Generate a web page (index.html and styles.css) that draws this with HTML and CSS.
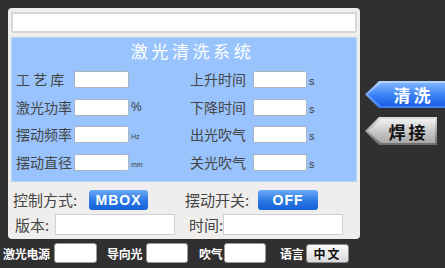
FILE: index.html
```html
<!DOCTYPE html>
<html lang="zh">
<head>
<meta charset="utf-8">
<link rel="stylesheet" href="styles.css">
</head>
<body>
<div class="screen">
  <div class="main">
    <div class="panel">
      <div class="topbar"></div>
      <div class="blue">
        <div class="title">激光清洗系统</div>
        <div class="grid">
          <div class="row">
            <span class="lbl spaced">工 艺 库</span><span class="fld"></span><span class="unit"></span>
            <span class="rlbl">上升时间</span><span class="fld r"></span><span class="unit s">s</span>
          </div>
          <div class="row">
            <span class="lbl">激光功率</span><span class="fld"></span><span class="unit pct">%</span>
            <span class="rlbl">下降时间</span><span class="fld r"></span><span class="unit s">s</span>
          </div>
          <div class="row">
            <span class="lbl">摆动频率</span><span class="fld"></span><span class="unit tiny">Hz</span>
            <span class="rlbl">出光吹气</span><span class="fld r"></span><span class="unit s">s</span>
          </div>
          <div class="row">
            <span class="lbl">摆动直径</span><span class="fld"></span><span class="unit tiny">mm</span>
            <span class="rlbl">关光吹气</span><span class="fld r"></span><span class="unit s">s</span>
          </div>
        </div>
      </div>
      <div class="ctrl">
        <span class="clbl">控制方式:</span><span class="btn mbox">MBOX</span>
        <span class="clbl second">摆动开关:</span><span class="btn off">OFF</span>
      </div>
      <div class="ver">
        <span class="vlbl">版本:</span><span class="vfld"></span>
        <span class="vlbl time">时间:</span><span class="vfld"></span>
      </div>
    </div>
    <div class="tabs">
      <div class="tab blue-tab"><div class="tab-in"><span>清洗</span></div></div>
      <div class="tab grey-tab"><div class="tab-in"><span>焊接</span></div></div>
    </div>
  </div>
  <div class="bottom">
    <span class="blbl b1">激光电源</span><span class="bfld f1"></span>
    <span class="blbl b2">导向光</span><span class="bfld f2"></span>
    <span class="blbl b3">吹气</span><span class="bfld f3"></span>
    <span class="blbl b4">语言</span><span class="langbtn">中文</span>
  </div>
</div>
</body>
</html>
```
FILE: styles.css
```css
* { box-sizing: border-box; }
html, body { margin: 0; padding: 0; }
body {
  width: 445px; height: 268px; overflow: hidden;
  background: #303030;
  font-family: "Noto Sans CJK SC", "Noto Sans", sans-serif;
}
.screen { width: 445px; height: 268px; display: flex; flex-direction: column; }
.main { display: flex; padding: 8px 0 0 8px; }
.panel {
  width: 355px; height: 231px;
  background: #efeeec;
  border-radius: 4px;
  padding: 4px 3px 4px 3px;
  display: flex; flex-direction: column;
}
.topbar {
  height: 21px; background: #fff;
  border: 2px solid #d6d6d6;
  border-radius: 2px;
}
.blue {
  margin-top: 4px; height: 145px;
  background: #99c3fc;
  border: 1px solid #b8d4f8;
  padding: 0 0 0 3px;
}
.title {
  height: 26px; line-height: 26px;
  text-align: center; color: #fff;
  font-size: 17px; letter-spacing: 3.6px;
  margin-bottom: 7px; padding-left: 14px;
}
.grid { display: flex; flex-direction: column; row-gap: 10.5px; }
.row { display: flex; align-items: center; height: 17px; }
.lbl, .rlbl {
  font-size: 14px; color: #454545; line-height: 17px; white-space: nowrap;
}
.lbl { width: 59px; padding-left: 1px; }
.rlbl { width: 63px; }
.fld {
  width: 55px; height: 17px; background: #fff;
  border: 1px solid #a9b4c2; border-radius: 2px;
}
.fld.r { width: 54px; }
.unit { width: 61px; padding-left: 2px; color: #3c3c3c; font-family: "Liberation Sans", sans-serif; }
.unit.pct { font-size: 12px; }
.unit.tiny { font-size: 7px; padding-top: 4px; }
.unit.s { width: auto; font-size: 11px; padding-top: 3px; }
.ctrl { display: flex; align-items: center; margin-top: 8px; height: 20px; }
.clbl { font-size: 15px; color: #454545; line-height: 20px; padding-left: 2px; width: 78px; white-space: nowrap; }
.clbl.second { width: 75px; margin-left: 35px; }
.btn {
  height: 20px; width: 59px; border-radius: 3px;
  background: linear-gradient(#6aaaf6, #2b78e4 55%, #1560d8);
  color: #fff; font-family: "Liberation Sans", sans-serif; font-weight: bold;
  font-size: 14px; letter-spacing: 1px;
  display: flex; align-items: center; justify-content: center;
}
.btn.off { width: 60px; }
.ver { display: flex; align-items: center; margin-top: 4px; height: 21px; }
.vlbl { font-size: 15px; color: #454545; width: 44px; padding-left: 4px; white-space: nowrap; }
.vlbl.time { width: 38px; margin-left: 10px; }
.vfld { width: 120px; height: 21px; background: #fff; border: 1px solid #cfcfcf; }
.tabs { display: flex; flex-direction: column; padding: 73px 0 0 5px; }
.tab {
  clip-path: polygon(0 50%, 14px 0, 100% 0, 100% 100%, 14px 100%);
  padding: 2px 0 2px 3px;
}
.tab-in {
  height: 100%;
  clip-path: polygon(0 50%, 13px 0, 100% 0, 100% 100%, 13px 100%);
  display: flex; align-items: center; justify-content: center; padding-left: 14px;
  font-size: 17px; letter-spacing: 3px; font-weight: bold;
}
.blue-tab { width: 80px; height: 27px; background: linear-gradient(#b4d4ff, #3b7cf0); }
.blue-tab .tab-in { background: linear-gradient(#7fb4ff, #3d84f6 50%, #1a5ee6); color: #fff; }
.grey-tab { width: 72px; height: 28px; margin-top: 9px; background: linear-gradient(#e0e0e0, #6c6c6c); padding-right: 2px; }
.grey-tab .tab-in { background: linear-gradient(#f2f2f2, #c9c9c9 50%, #a8a8a8); color: #111; }
.bottom { display: flex; align-items: center; margin-top: 4px; height: 20px; padding-left: 3px; }
.blbl { color: #fff; font-size: 12px; font-weight: bold; white-space: nowrap; letter-spacing: -0.3px; }
.b1 { width: 51px; }
.b2 { width: 39px; }
.b3 { width: 25px; }
.b4 { width: 26px; }
.bfld {
  width: 42px; height: 20px; background: #fff;
  border-radius: 3px; border: 1px solid #9a9a9a;
}
.f1 { width: 43px; margin-right: 10px; }
.f2 { margin-right: 11px; }
.f3 { margin-right: 14px; }
.langbtn {
  width: 43px; height: 19px; border-radius: 3px;
  background: linear-gradient(#fbfbfb, #d8d8d8);
  border: 1px solid #8a8a8a;
  color: #111; font-size: 12px; font-weight: bold; letter-spacing: 2px;
  display: flex; align-items: center; justify-content: center;
}
```
